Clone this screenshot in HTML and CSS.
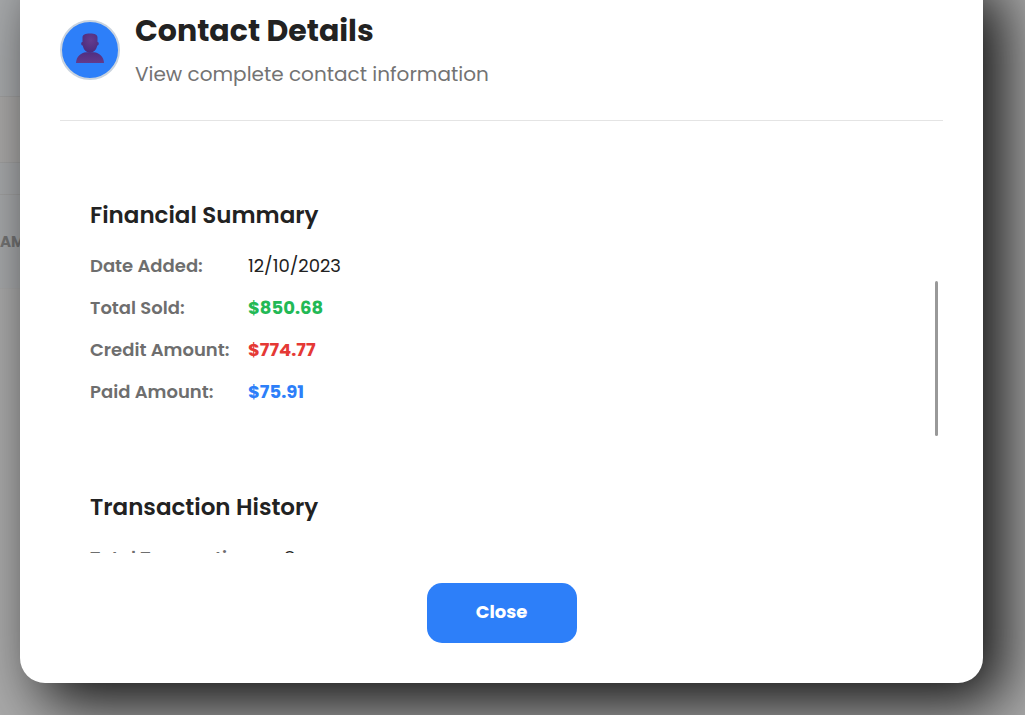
FILE: index.html
```html
<!DOCTYPE html>
<html lang="en">
<head>
<meta charset="utf-8">
<meta name="viewport" content="width=device-width, initial-scale=1">
<title>Contact Details</title>
<link rel="stylesheet" href="styles.css">
</head>
<body>
<div class="page" aria-hidden="true">
  <div class="band band-top"></div>
  <div class="band band-filter"></div>
  <div class="band band-gap"></div>
  <div class="band band-head">AMOUNT</div>
  <div class="band band-rest"></div>
</div>
<div class="overlay">
  <section class="modal" role="dialog" aria-labelledby="modal-title">
    <header class="modal-header">
      <div class="avatar">
        <svg class="avatar-icon" viewBox="0 0 28 30" aria-hidden="true">
          <defs>
            <radialGradient id="skin" cx="55%" cy="35%" r="65%">
              <stop offset="0" stop-color="#643c8e"/>
              <stop offset="1" stop-color="#4b2c7c"/>
            </radialGradient>
            <linearGradient id="body" x1="0" y1="0" x2="0" y2="1">
              <stop offset="0" stop-color="#512e80"/>
              <stop offset="1" stop-color="#633a8b"/>
            </linearGradient>
          </defs>
          <path fill="url(#body)" d="M0 30C0 24 5 19.500 10 19.200H18C23 19.500 28 24 28 30Z"/>
          <path fill="url(#skin)" d="M6.500 9V4.500C6.500 1.800 9 .5 14 .5S21.500 1.800 21.500 4.500V9C23.300 8.800 23.200 12.500 21.200 12.600C20.500 17 17.500 19.800 14 19.800S7.500 17 6.800 12.600C4.800 12.500 4.700 8.800 6.500 9Z"/>
        </svg>
      </div>
      <div class="heading">
        <h1 class="title" id="modal-title">Contact Details</h1>
        <p class="subtitle">View complete contact information</p>
      </div>
    </header>
    <div class="content">
      <div class="scroll">
        <section class="card">
          <h2 class="card-title">Financial Summary</h2>
          <dl class="details">
            <dt>Date Added:</dt><dd>12/10/2023</dd>
            <dt>Total Sold:</dt><dd class="amount sold">$850.68</dd>
            <dt>Credit Amount:</dt><dd class="amount credit">$774.77</dd>
            <dt>Paid Amount:</dt><dd class="amount paid">$75.91</dd>
          </dl>
        </section>
        <section class="card">
          <h2 class="card-title">Transaction History</h2>
          <dl class="details details-wide">
            <dt>Total Transactions:</dt><dd>8</dd>
          </dl>
        </section>
      </div>
      <div class="scroll-thumb"></div>
    </div>
    <footer class="modal-footer">
      <button class="close" type="button">Close</button>
    </footer>
  </section>
</div>
</body>
</html>
```
FILE: styles.css
```css
* { box-sizing: border-box; }

body {
  margin: 0;
  height: 100vh;
  overflow: hidden;
  font-family: Poppins, Inter, "Open Sans", sans-serif;
  color: #222;
  background: #aaa;
}

h1, h2, p, dl, dd { margin: 0; }

.page {
  position: absolute;
  inset: 0 50% 0 0;
  display: flex;
  flex-direction: column;
}

.band { border-bottom: 1px solid #a0a0a0; }
.band-top { height: 97px; background: #a8aaac; }
.band-filter { height: 66px; background: #aaa9a8; }
.band-gap { height: 32px; background: #a7a9ab; }
.band-head {
  height: 94px;
  padding-top: 37px;
  font-size: 15px;
  line-height: 20px;
  font-weight: 700;
  color: #747474;
  background: #a7a9ab;
  border-color: #a7a7a7;
}
.band-rest { flex: 1; background: #aaa; border: 0; }

.overlay {
  position: relative;
  height: 100%;
  padding: 0 42px 32px 20px;
}

.modal {
  display: flex;
  flex-direction: column;
  height: calc(100% + 30px);
  margin-top: -30px;
  padding: 50px 40px 40px;
  border-radius: 25px;
  background: #fff;
  box-shadow: 20px 20px 60px rgba(0, 0, 0, 0.9);
}

.modal-header {
  display: flex;
  gap: 15px;
  padding-bottom: 30px;
  border-bottom: 1px solid #e4e4e4;
}

.avatar {
  display: flex;
  align-items: center;
  justify-content: center;
  width: 60px;
  height: 60px;
  border: 2px solid #c9d3df;
  border-radius: 50%;
  background: #2d7ff9;
}

.avatar-icon {
  width: 28px;
  height: 30px;
  margin-bottom: 4px;
}

.title {
  margin-top: -8px;
  font-size: 30px;
  line-height: 38px;
  font-weight: 700;
}

.subtitle {
  padding: 9px 0 1px;
  font-size: 20px;
  line-height: 30px;
  color: #737373;
}

.content {
  position: relative;
  flex: 1;
  min-height: 0;
}

.scroll {
  height: 100%;
  overflow: hidden;
  padding: 50px 30px 0;
}

.card { padding: 30px 0; }
.card + .card { margin-top: 27px; }

.card-title {
  margin-bottom: 23px;
  font-size: 23px;
  line-height: 28px;
  font-weight: 600;
}

.details {
  display: grid;
  grid-template-columns: 138px 1fr;
  gap: 14px 20px;
  font-size: 18px;
  line-height: 28px;
}

.details-wide { grid-template-columns: 174px 1fr; }

.details dt {
  font-weight: 600;
  color: #6e6e6e;
  white-space: nowrap;
}

.details .amount { font-weight: 700; }
.sold { color: #22b955; }
.credit { color: #e53935; }
.paid { color: #2d7ff9; }

.scroll-thumb {
  position: absolute;
  top: 160px;
  right: 5px;
  width: 3px;
  height: 155px;
  border-radius: 2px;
  background: #999;
}

.modal-footer {
  display: flex;
  justify-content: center;
  padding-top: 30px;
}

.close {
  width: 150px;
  height: 60px;
  padding: 0 0 4px;
  border: 0;
  border-radius: 15px;
  font: inherit;
  font-size: 18px;
  font-weight: 700;
  color: #fff;
  background: #2d7ff9;
}
```
